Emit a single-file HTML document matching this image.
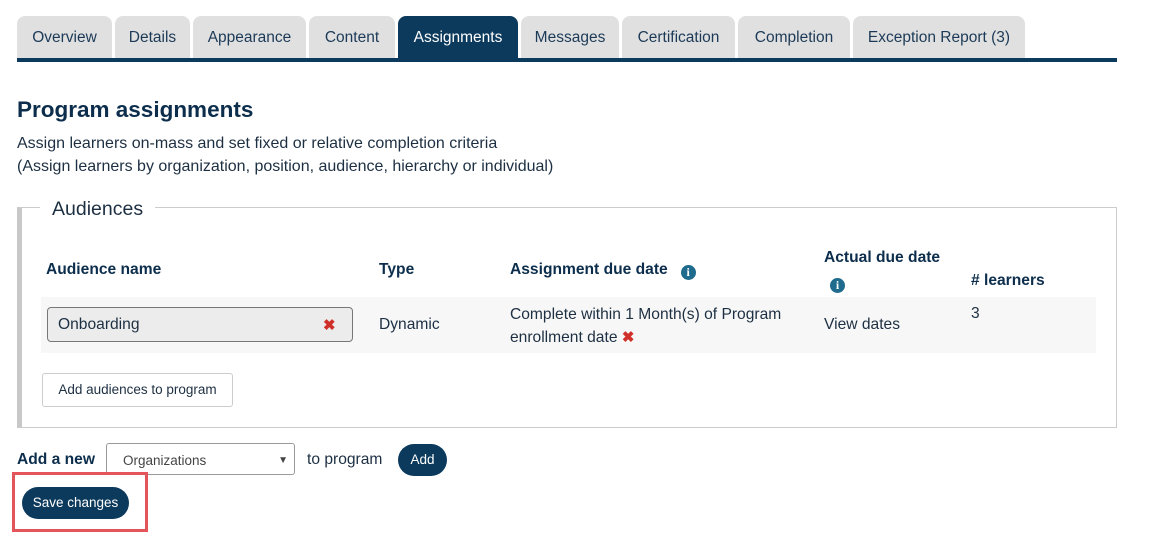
<!DOCTYPE html>
<html><head><style>
body{margin:0;background:#fff;font-family:"Liberation Sans",sans-serif;color:#1d2f42;width:1171px;height:533px;position:relative;overflow:hidden;font-size:15.6px}
.a{position:absolute;white-space:nowrap}
.tab{position:absolute;top:16px;height:42px;background:#e0e0e0;border-radius:8px 8px 0 0;color:#1c3a57;font-size:15.5px;line-height:44px;text-align:center}
.tab.on{background:#0c3a5c;color:#fff}
.bar{position:absolute;left:17px;top:58px;width:1100px;height:4px;background:#0c3a5c}
b{color:#0c2e4c}
.x{color:#d0302a;font-weight:bold;font-size:15px}
.i{display:inline-block;width:15px;height:15px;border-radius:50%;background:#1f6b8e;color:#fff;font-size:12px;line-height:15px;text-align:center;font-weight:bold;font-family:"Liberation Serif",serif;vertical-align:-2px}
.btn{position:absolute;background:#0c3a5c;color:#fff;border-radius:16px;font-size:13.5px;text-align:center}
</style></head><body>
<div class="tab" style="left:17px;width:95px">Overview</div>
<div class="tab" style="left:115px;width:75px">Details</div>
<div class="tab" style="left:193px;width:113px">Appearance</div>
<div class="tab" style="left:309px;width:86px">Content</div>
<div class="tab on" style="left:398px;width:120px">Assignments</div>
<div class="tab" style="left:521px;width:98px">Messages</div>
<div class="tab" style="left:622px;width:113px">Certification</div>
<div class="tab" style="left:738px;width:112px">Completion</div>
<div class="tab" style="left:853px;width:172px">Exception Report (3)</div>
<div class="bar"></div>
<div class="a" style="left:17px;top:97px;font-size:22.5px;font-weight:bold;color:#0c2e4c">Program assignments</div>
<div class="a" style="left:17px;top:135px;font-size:16px">Assign learners on-mass and set fixed or relative completion criteria</div>
<div class="a" style="left:17px;top:158px;font-size:16px">(Assign learners by organization, position, audience, hierarchy or individual)</div>
<div class="a" style="left:17px;top:207px;height:219px;border:1px solid #ccc;border-left:5px solid #c8c8c8;width:1094px"></div>
<div class="a" style="left:40px;top:198px;background:#fff;padding:0 12px;font-size:19.5px;color:#1d2f42">Audiences</div>
<div class="a" style="left:46px;top:261px"><b>Audience name</b></div>
<div class="a" style="left:379px;top:261px"><b>Type</b></div>
<div class="a" style="left:510px;top:261px"><b>Assignment due date</b> &nbsp; <span class="i">i</span></div>
<div class="a" style="left:824px;top:249px"><b>Actual due date</b></div>
<div class="a" style="left:830px;top:274px"><span class="i">i</span></div>
<div class="a" style="left:971px;top:272px"><b># learners</b></div>
<div class="a" style="left:41px;top:297px;width:1055px;height:56px;background:#f7f7f7"></div>
<div class="a" style="left:47px;top:307px;width:304px;height:33px;background:#ececec;border:1px solid #777;border-radius:4px"></div>
<div class="a" style="left:58px;top:316px">Onboarding</div>
<div class="a x" style="left:323px;top:316px">✖</div>
<div class="a" style="left:379px;top:316px">Dynamic</div>
<div class="a" style="left:510px;top:303px;line-height:23px">Complete within 1 Month(s) of Program<br>enrollment date <span class="x">✖</span></div>
<div class="a" style="left:824px;top:316px">View dates</div>
<div class="a" style="left:971px;top:305px">3</div>
<div class="a" style="left:42px;top:373px;width:189px;height:32px;border:1px solid #ccc;border-radius:3px;font-size:13.5px;line-height:32px;text-align:center">Add audiences to program</div>
<div class="a" style="left:17px;top:451px"><b>Add a new</b></div>
<div class="a" style="left:106px;top:443px;width:189px;height:32px;border:1px solid #999;border-radius:3px;font-size:13.5px;line-height:34px;color:#444;padding-left:16px;box-sizing:border-box">Organizations<span style="position:absolute;right:6px;font-size:10px">▼</span></div>
<div class="a" style="left:307px;top:451px">to program</div>
<div class="btn" style="left:398px;top:444px;width:49px;height:32px;line-height:32px">Add</div>
<div class="a" style="left:12px;top:472px;width:130px;height:54px;border:3px solid #e4555b"></div>
<div class="btn" style="left:22px;top:487px;width:107px;height:32px;line-height:32px">Save changes</div>
</body></html>
